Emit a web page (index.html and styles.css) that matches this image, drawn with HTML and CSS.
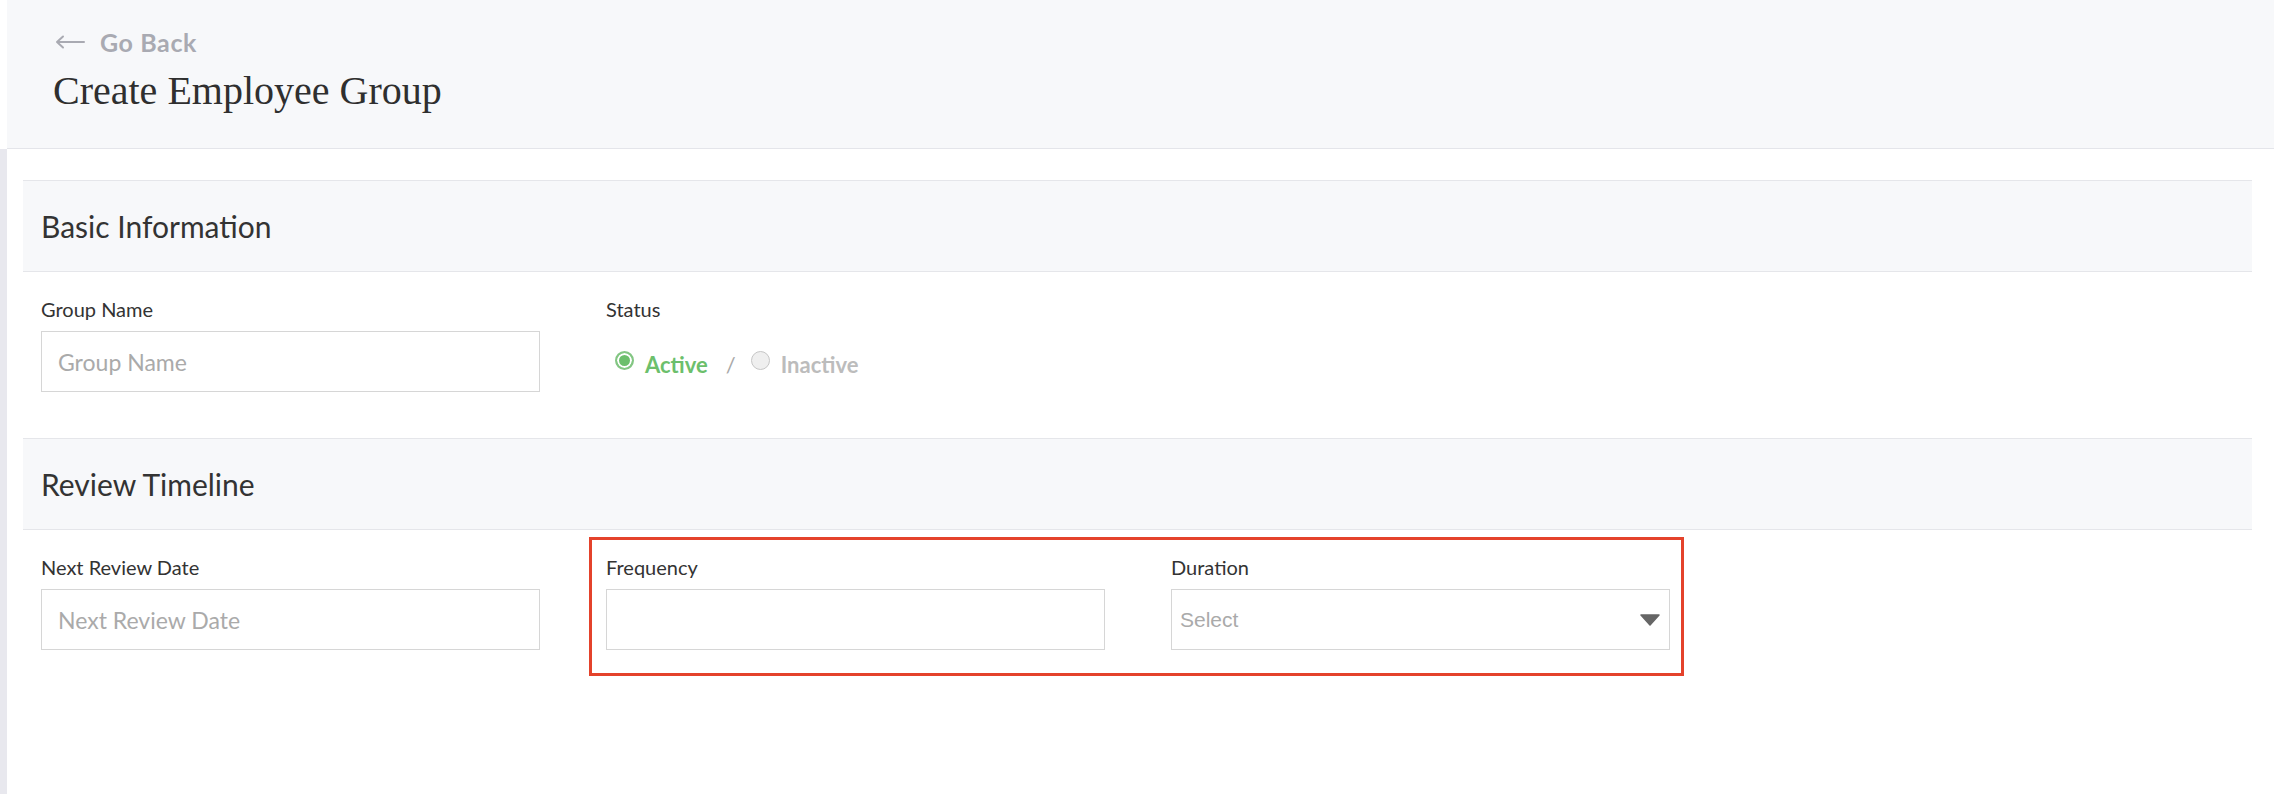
FILE: index.html
```html
<!DOCTYPE html>
<html lang="en">
<head>
    <meta charset="UTF-8">
    <meta name="viewport" content="width=device-width, initial-scale=1.0">
    <title>Create Employee Group</title>
    <link rel="stylesheet" href="styles.css">
</head>
<body>
    <!-- Page header -->
    <div class="page-head">
        <a class="back-link" href="#">
            <svg class="back-arrow" width="30" height="14" viewBox="0 0 30 14">
                <path d="M29 7H2M8 1.5L2 7l6 5.5" stroke="#a9aab2" stroke-width="2" fill="none" stroke-linecap="round" stroke-linejoin="round"/>
            </svg>
            Go Back
        </a>
        <h1 class="page-title">Create Employee Group</h1>
    </div>

    <div class="content">
        <!-- Basic information -->
        <div class="section">
            <div class="section-head">
                <h2>Basic Information</h2>
            </div>
            <div class="section-body">
                <div class="field">
                    <label for="groupName">Group Name</label>
                    <input type="text" id="groupName" class="text-input" placeholder="Group Name">
                </div>
                <div class="field">
                    <label>Status</label>
                    <div class="status-toggle">
                        <span class="radio checked"></span>
                        <span class="status-opt active">Active</span>
                        <span class="status-sep">/</span>
                        <span class="radio"></span>
                        <span class="status-opt inactive">Inactive</span>
                    </div>
                </div>
            </div>
        </div>

        <!-- Review timeline -->
        <div class="section">
            <div class="section-head">
                <h2>Review Timeline</h2>
            </div>
            <div class="section-body">
                <div class="field">
                    <label for="nextReview">Next Review Date</label>
                    <input type="text" id="nextReview" class="text-input" placeholder="Next Review Date">
                </div>
                <div class="highlight">
                    <div class="field">
                        <label for="frequency">Frequency</label>
                        <input type="text" id="frequency" class="text-input">
                    </div>
                    <div class="field">
                        <label>Duration</label>
                        <div class="select-box">
                            <span class="select-text">Select</span>
                            <svg class="select-caret" width="20" height="12" viewBox="0 0 20 12">
                                <polygon points="1,1 19,1 10,11" fill="#666" stroke="#666" stroke-width="1.5" stroke-linejoin="round"/>
                            </svg>
                        </div>
                    </div>
                </div>
            </div>
        </div>
    </div>
</body>
</html>
```

FILE: styles.css
```css
/* Base */
body {
    margin: 0;
    background-color: #fff;
    font-family: Lato, "Open Sans", sans-serif;
    color: #333;
}

/* Page header */
.page-head {
    margin-left: 7px;
    background-color: #f7f8fa;
    border-bottom: 1px solid #e4e5ea;
    padding: 30px 45px 33px 46px;
}

.back-link {
    display: flex;
    align-items: center;
    gap: 15px;
    height: 24px;
    font-size: 25px;
    line-height: 24px;
    letter-spacing: 0.6px;
    font-weight: bold;
    color: #a9aab2;
    text-decoration: none;
}

.back-arrow {
    margin-left: 2px;
}

.page-title {
    margin: 13px 0 0;
    font-family: "Liberation Serif", "DejaVu Serif", serif;
    font-weight: normal;
    font-size: 40px;
    line-height: 48px;
    color: #2f2f2f;
}

/* Content */
.content {
    border-left: 7px solid #e8e8ee;
    padding: 31px 22px 0 16px;
    min-height: 614px;
}

.section-head {
    height: 90px;
    display: flex;
    align-items: center;
    padding: 0 18px;
    background-color: #f7f8fa;
    border-top: 1px solid #e5e6ea;
    border-bottom: 1px solid #e5e6ea;
}

.section-head h2 {
    margin: 0;
    font-size: 30px;
    font-weight: normal;
    color: #333;
}

.section-body {
    display: flex;
    align-items: flex-start;
    gap: 66px;
    padding: 25px 18px 46px;
}

.field {
    width: 499px;
}

.field label {
    display: block;
    font-size: 20px;
    line-height: 24px;
    margin-bottom: 10px;
    color: #333;
}

.text-input {
    box-sizing: border-box;
    width: 100%;
    height: 61px;
    padding: 0 16px;
    border: 1px solid #d6d6d6;
    border-radius: 0;
    font-family: Lato, sans-serif;
    font-size: 23px;
    color: #333;
    outline: none;
}

.text-input::placeholder {
    color: #aaa;
}

/* Status radios */
.status-toggle {
    height: 61px;
    display: flex;
    align-items: center;
    padding: 5px 0 0 9px;
    box-sizing: border-box;
    font-size: 22px;
    font-weight: bold;
}

.radio {
    box-sizing: border-box;
    width: 19px;
    height: 19px;
    border-radius: 50%;
    border: 1px solid #c6c6c6;
    background-color: #efefef;
    margin-right: 11px;
    position: relative;
    top: -4px;
}

.radio.checked {
    border: 2px solid #83c683;
    background-color: #6cbf6c;
    box-shadow: inset 0 0 0 2px #fff;
}

.status-opt.active {
    color: #6cbf6c;
}

.status-opt.inactive {
    color: #bcbcbc;
}

.status-sep {
    margin: 0 15px 0 18px;
    color: #a9a9a9;
    font-weight: normal;
}

/* Highlighted group */
.highlight {
    display: flex;
    gap: 66px;
    border: 3px solid #e4422b;
    margin: -18px -14px -26px -17px;
    padding: 15px 11px 23px 14px;
}

.select-box {
    box-sizing: border-box;
    height: 61px;
    display: flex;
    align-items: center;
    justify-content: space-between;
    padding: 0 9px 0 8px;
    border: 1px solid #d6d6d6;
}

.select-text {
    font-family: "Liberation Sans", Arial, sans-serif;
    font-size: 21px;
    color: #aaa;
}
```
